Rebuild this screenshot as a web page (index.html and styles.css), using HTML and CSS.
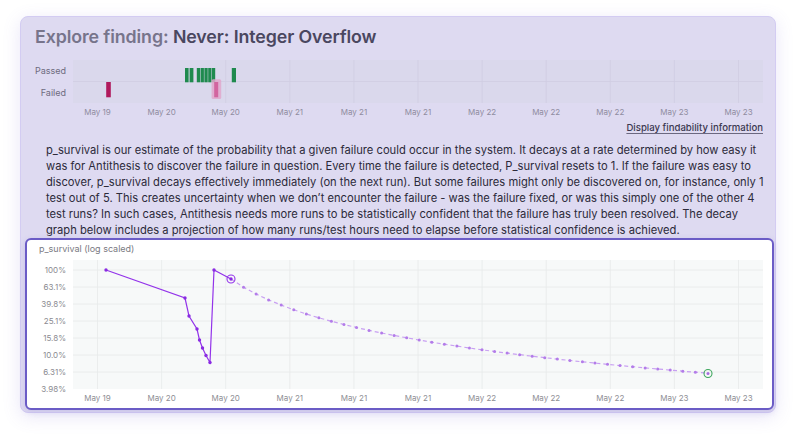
FILE: index.html
```html
<!DOCTYPE html>
<html>
<head>
<meta charset="utf-8">
<link rel="stylesheet" href="styles.css">
</head>
<body>
<div class="card">
  <h1 class="title"><span class="muted">Explore finding:</span> Never: Integer Overflow</h1>
  <div class="timeline">
    <svg width="749" height="60" viewBox="24 58 749 60">
      <rect class="plot-bg" x="72" y="60" width="690" height="43"/>
      <g class="tl-grid">
        <line x1="72" y1="81.5" x2="762" y2="81.5"/>
        <line x1="224.7" y1="60" x2="224.7" y2="103"/>
        <line x1="288.8" y1="60" x2="288.8" y2="103"/>
        <line x1="352.9" y1="60" x2="352.9" y2="103"/>
        <line x1="417" y1="60" x2="417" y2="103"/>
        <line x1="481.1" y1="60" x2="481.1" y2="103"/>
        <line x1="545.2" y1="60" x2="545.2" y2="103"/>
        <line x1="609.3" y1="60" x2="609.3" y2="103"/>
        <line x1="673.4" y1="60" x2="673.4" y2="103"/>
        <line x1="737.5" y1="60" x2="737.5" y2="103"/>
      </g>
      <g class="tl-ylabels">
        <text x="65" y="73.5">Passed</text>
        <text x="65" y="95.5">Failed</text>
      </g>
      <g class="pass">
        <rect x="184" y="68" width="3.6" height="14.3"/>
        <rect x="188.6" y="68" width="3.8" height="14.3"/>
        <rect x="195.8" y="68" width="3.3" height="14.3"/>
        <rect x="199.6" y="68" width="3.3" height="14.3"/>
        <rect x="203.4" y="68" width="3.3" height="14.3"/>
        <rect x="207.2" y="68" width="3.3" height="14.3"/>
        <rect x="211" y="68" width="3.2" height="14.3"/>
        <rect x="230.8" y="68" width="4.2" height="14.3"/>
      </g>
      <rect class="fail" x="105.2" y="82" width="4.6" height="15.3"/>
      <rect class="fail-hl" x="210.6" y="79.3" width="9.6" height="19.7" rx="1.5"/>
      <rect class="fail-sel" x="213.2" y="82" width="4" height="15.3"/>
      <g class="xlabels tl-x">
        <text x="96.5" y="115">May 19</text>
        <text x="160.6" y="115">May 20</text>
        <text x="224.7" y="115">May 20</text>
        <text x="288.8" y="115">May 21</text>
        <text x="352.9" y="115">May 21</text>
        <text x="417" y="115">May 21</text>
        <text x="481.1" y="115">May 22</text>
        <text x="545.2" y="115">May 22</text>
        <text x="609.3" y="115">May 22</text>
        <text x="673.4" y="115">May 23</text>
        <text x="737.5" y="115">May 23</text>
      </g>
    </svg>
  </div>
  <div class="link-row"><a class="link">Display findability information</a></div>
  <p class="desc">p_survival is our estimate of the probability that a given failure could occur in the system. It decays at a rate determined by how easy it was for Antithesis to discover the failure in question. Every time the failure is detected, P_survival resets to 1. If the failure was easy to discover, p_survival decays effectively immediately (on the next run). But some failures might only be discovered on, for instance, only 1 test out of 5. This creates uncertainty when we don’t encounter the failure - was the failure fixed, or was this simply one of the other 4 test runs? In such cases, Antithesis needs more runs to be statistically confident that the failure has truly been resolved. The decay graph below includes a projection of how many runs/test hours need to elapse before statistical confidence is achieved.</p>
  <div class="chart">
    <div class="chart-label">p_survival (log scaled)</div>
    <svg width="745" height="152" viewBox="26 256 745 152">
      <rect class="chart-bg" x="72" y="260" width="690" height="129"/>
      <g class="grid">
        <line x1="72" y1="270" x2="762" y2="270"/>
        <line x1="72" y1="287" x2="762" y2="287"/>
        <line x1="72" y1="304" x2="762" y2="304"/>
        <line x1="72" y1="321" x2="762" y2="321"/>
        <line x1="72" y1="338" x2="762" y2="338"/>
        <line x1="72" y1="355" x2="762" y2="355"/>
        <line x1="72" y1="372" x2="762" y2="372"/>
        <line x1="96.5" y1="260" x2="96.5" y2="389"/>
        <line x1="160.6" y1="260" x2="160.6" y2="389"/>
        <line x1="224.7" y1="260" x2="224.7" y2="389"/>
        <line x1="288.8" y1="260" x2="288.8" y2="389"/>
        <line x1="352.9" y1="260" x2="352.9" y2="389"/>
        <line x1="417" y1="260" x2="417" y2="389"/>
        <line x1="481.1" y1="260" x2="481.1" y2="389"/>
        <line x1="545.2" y1="260" x2="545.2" y2="389"/>
        <line x1="609.3" y1="260" x2="609.3" y2="389"/>
        <line x1="673.4" y1="260" x2="673.4" y2="389"/>
        <line x1="737.5" y1="260" x2="737.5" y2="389"/>
      </g>
      <g class="ylabels">
        <text x="65" y="273">100%</text>
        <text x="65" y="290">63.1%</text>
        <text x="65" y="307">39.8%</text>
        <text x="65" y="324">25.1%</text>
        <text x="65" y="341">15.8%</text>
        <text x="65" y="358">10.0%</text>
        <text x="65" y="375">6.31%</text>
        <text x="65" y="392">3.98%</text>
      </g>
      <g class="xlabels">
        <text x="96.5" y="401">May 19</text>
        <text x="160.6" y="401">May 20</text>
        <text x="224.7" y="401">May 20</text>
        <text x="288.8" y="401">May 21</text>
        <text x="352.9" y="401">May 21</text>
        <text x="417" y="401">May 21</text>
        <text x="481.1" y="401">May 22</text>
        <text x="545.2" y="401">May 22</text>
        <text x="609.3" y="401">May 22</text>
        <text x="673.4" y="401">May 23</text>
        <text x="737.5" y="401">May 23</text>
      </g>
      <polyline class="proj" points="230,279 242.55,287.2 255.1,294 267.65,299.9 280.2,305.1 292.75,309.8 305.3,314 317.85,317.8 330.4,321.3 342.95,324.5 355.5,327.5 368.05,330.4 380.6,333 393.15,335.5 405.7,337.8 418.25,340.1 430.8,342.2 443.35,344.2 455.9,346.1 468.45,348 481,349.8 493.55,351.5 506.1,353.1 518.65,354.7 531.2,356.2 543.75,357.7 556.3,359.1 568.85,360.5 581.4,361.8 593.95,363.1 606.5,364.3 619.05,365.6 631.6,366.7 644.15,367.9 656.7,369 669.25,370.1 681.8,371.2 694.35,372.2 706.9,373.2"/>
      <g class="proj-dots">
        <circle cx="242.55" cy="287.2" r="1.5"/><circle cx="255.1" cy="294" r="1.5"/><circle cx="267.65" cy="299.9" r="1.5"/><circle cx="280.2" cy="305.1" r="1.5"/><circle cx="292.75" cy="309.8" r="1.5"/><circle cx="305.3" cy="314" r="1.5"/><circle cx="317.85" cy="317.8" r="1.5"/><circle cx="330.4" cy="321.3" r="1.5"/><circle cx="342.95" cy="324.5" r="1.5"/><circle cx="355.5" cy="327.5" r="1.5"/><circle cx="368.05" cy="330.4" r="1.5"/><circle cx="380.6" cy="333" r="1.5"/><circle cx="393.15" cy="335.5" r="1.5"/><circle cx="405.7" cy="337.8" r="1.5"/><circle cx="418.25" cy="340.1" r="1.5"/><circle cx="430.8" cy="342.2" r="1.5"/><circle cx="443.35" cy="344.2" r="1.5"/><circle cx="455.9" cy="346.1" r="1.5"/><circle cx="468.45" cy="348" r="1.5"/><circle cx="481" cy="349.8" r="1.5"/><circle cx="493.55" cy="351.5" r="1.5"/><circle cx="506.1" cy="353.1" r="1.5"/><circle cx="518.65" cy="354.7" r="1.5"/><circle cx="531.2" cy="356.2" r="1.5"/><circle cx="543.75" cy="357.7" r="1.5"/><circle cx="556.3" cy="359.1" r="1.5"/><circle cx="568.85" cy="360.5" r="1.5"/><circle cx="581.4" cy="361.8" r="1.5"/><circle cx="593.95" cy="363.1" r="1.5"/><circle cx="606.5" cy="364.3" r="1.5"/><circle cx="619.05" cy="365.6" r="1.5"/><circle cx="631.6" cy="366.7" r="1.5"/><circle cx="644.15" cy="367.9" r="1.5"/><circle cx="656.7" cy="369" r="1.5"/><circle cx="669.25" cy="370.1" r="1.5"/><circle cx="681.8" cy="371.2" r="1.5"/><circle cx="694.35" cy="372.2" r="1.5"/>
      </g>
      <polyline class="line" points="105,270 184,298 188,316 196,329 198.5,340 201.5,348 205,355.5 209,362.5 213,270 230,279"/>
      <g class="dots">
        <circle cx="105" cy="270" r="1.7"/><circle cx="184" cy="298" r="1.7"/><circle cx="188" cy="316" r="1.7"/><circle cx="196" cy="329" r="1.7"/><circle cx="198.5" cy="340" r="1.7"/><circle cx="201.5" cy="348" r="1.7"/><circle cx="205" cy="355.5" r="1.7"/><circle cx="209" cy="362.5" r="1.7"/><circle cx="213" cy="270" r="1.7"/><circle cx="230" cy="279" r="1.7"/>
      </g>
      <circle class="ring" cx="230" cy="279" r="4"/>
      <circle class="ring-end" cx="707" cy="373.5" r="4"/>
      <circle class="end-dot" cx="707" cy="373.5" r="1.5"/>
    </svg>
  </div>
</div>
</body>
</html>
```

FILE: styles.css
```css
html, body {
  margin: 0;
  padding: 0;
  background: #ffffff;
}

body {
  font-family: Inter, "Noto Sans", "Liberation Sans", sans-serif;
  width: 800px;
  height: 437px;
  overflow: hidden;
}

.card {
  box-sizing: border-box;
  margin: 16px 0 0 20px;
  width: 756px;
  height: 397px;
  padding: 9px 3px 0 4px;
  background: #dedaf1;
  border: 1px solid #d3ccf2;
  border-radius: 8px;
  box-shadow: 0 4px 18px rgba(120, 100, 210, 0.16);
}

.title {
  margin: 0 0 0 10px;
  font-size: 17.8px;
  line-height: 22px;
  font-weight: 600;
  color: #4a4760;
  letter-spacing: -0.1px;
}

.muted {
  color: #77748b;
}

.timeline {
  margin-top: 10px;
  height: 60px;
}

.timeline svg {
  display: block;
}

.plot-bg {
  fill: #dad8ec;
}

.tl-grid line {
  stroke: #cfcde2;
  stroke-width: 0.8;
}

.tl-ylabels text {
  font-size: 9px;
  fill: #6e6b80;
  text-anchor: end;
}

.pass rect {
  fill: #1f8a4e;
}

.fail {
  fill: #b0195c;
}

.fail-hl {
  fill: #e0a8cd;
  opacity: 0.85;
}

.fail-sel {
  fill: #d2659f;
}

.xlabels text {
  font-size: 8px;
  fill: #8f8ca0;
  text-anchor: middle;
}

.link-row {
  display: flex;
  justify-content: flex-end;
  padding-right: 9px;
  margin-top: 3px;
  height: 14px;
}

.link {
  font-size: 9.6px;
  line-height: 14px;
  font-weight: 500;
  color: #3b3850;
  text-decoration: underline;
  text-underline-offset: 2px;
  text-decoration-color: #6b6880;
}

.desc {
  margin: 7px 0 0 21px;
  width: 722px;
  font-size: 11.2px;
  line-height: 16px;
  color: #2c2a3a;
}

.chart {
  box-sizing: border-box;
  margin-top: 0;
  width: 749px;
  height: 172px;
  background: #ffffff;
  border: 2px solid #6b5cc6;
  border-radius: 6px;
  box-shadow: 0 2px 6px rgba(110, 90, 200, 0.2);
}

.chart-label {
  padding: 2px 0 0 12px;
  height: 14px;
  font-size: 9px;
  line-height: 14px;
  color: #7a7a82;
}

.chart svg {
  display: block;
}

.chart-bg {
  fill: #f7f9f9;
}

.grid line {
  stroke: #e7eaea;
  stroke-width: 0.8;
}

.ylabels text {
  font-size: 8px;
  fill: #8a8a90;
  text-anchor: end;
}

.chart .xlabels text {
  fill: #8e8e94;
}

.line {
  fill: none;
  stroke: #9333ea;
  stroke-width: 1.2;
}

.dots circle {
  fill: #8a2be2;
}

.proj {
  fill: none;
  stroke: #c9a0f2;
  stroke-width: 1.2;
  stroke-dasharray: 4 3;
}

.proj-dots circle {
  fill: #b37ce9;
}

.ring {
  fill: none;
  stroke: #9333ea;
  stroke-width: 1.1;
}

.ring-end {
  fill: none;
  stroke: #3ea75e;
  stroke-width: 1.1;
}

.end-dot {
  fill: #a56be0;
}
```
